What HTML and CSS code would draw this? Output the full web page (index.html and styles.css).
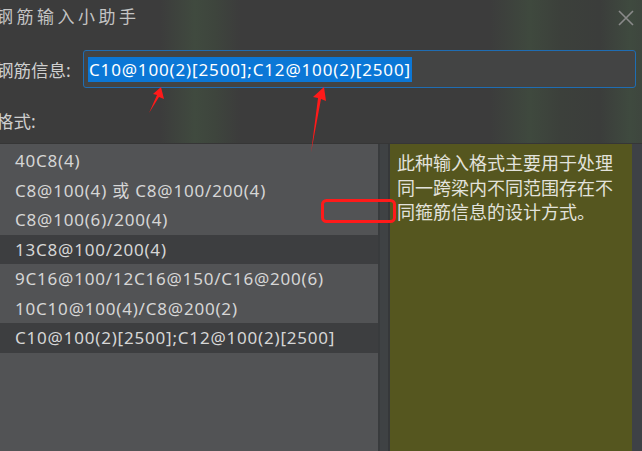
FILE: index.html
```html
<!DOCTYPE html>
<html lang="zh-CN">
<head>
	<meta charset="UTF-8">
	<meta name="viewport" content="width=device-width, initial-scale=1.0">
	<title>钢筋输入小助手</title>
	<link rel="stylesheet" href="styles.css">
</head>
<body>
	<div class="dialog">
		<div class="titlebar">
			<span class="title">钢筋输入小助手</span>
			<svg class="close" width="16" height="16" viewBox="0 0 16 16">
				<path d="M1 1 L15 15 M15 1 L1 15" stroke="#8a8a8a" stroke-width="1.6" fill="none"/>
			</svg>
		</div>

		<div class="info-row">
			<span class="label">钢筋信息:</span>
			<div class="input"><span class="selected">C10@100(2)[2500];C12@100(2)[2500]</span></div>
		</div>

		<div class="format-label">格式:</div>

		<div class="panels">
			<ul class="format-list">
				<li>40C8(4)</li>
				<li>C8@100(4) 或 C8@100/200(4)</li>
				<li>C8@100(6)/200(4)</li>
				<li class="active">13C8@100/200(4)</li>
				<li>9C16@100/12C16@150/C16@200(6)</li>
				<li>10C10@100(4)/C8@200(2)</li>
				<li class="active">C10@100(2)[2500];C12@100(2)[2500]</li>
			</ul>
			<div class="splitter"></div>
			<div class="desc">此种输入格式主要用于处理同一跨梁内不同范围存在不同箍筋信息的设计方式。</div>
			<div class="edge"></div>
		</div>
	</div>

	<!-- 标注 -->
	<svg class="marks" width="642" height="451" viewBox="0 0 642 451">
		<path d="M161 87 L164 99 L159 97 L149 113 L157 95 L153 94 Z" fill="#ff1a1a"/>
		<path d="M324 87 L326 101 L321 99 L311 153 L318 98 L313 97 Z" fill="#ff1a1a"/>
		<rect x="322.5" y="200.5" width="72" height="21" rx="4" fill="none" stroke="#ff1a1a" stroke-width="3"/>
	</svg>
</body>
</html>
```

FILE: styles.css
```css
* {
	margin: 0;
	padding: 0;
	box-sizing: border-box;
}

body {
	width: 642px;
	height: 451px;
	overflow: hidden;
	font-family: 'Noto Sans', 'Noto Sans CJK SC', sans-serif;
	color: #d4d4d4;
	background-color: #3c3c3c;
	background-image: linear-gradient(90deg,
		#3c3c3c 0px, #3c3c3c 160px, #404a3f 195px, #3e453d 215px, #3c3c3c 240px,
		#3c3c3c 490px, #3f493e 530px, #3c403b 560px, #3b3d3b 600px, #3f4a3f 630px, #3e463e 642px);
	position: relative;
}

.dialog {
	display: flex;
	flex-direction: column;
	height: 100%;
}

.titlebar {
	height: 40px;
	display: flex;
	align-items: flex-start;
	justify-content: space-between;
	padding: 4px 8px 0 0;
}

.title {
	margin-left: -4px;
	font-size: 17px;
	letter-spacing: 3.5px;
	color: #c4c4c4;
	line-height: 26px;
}

.close {
	margin-top: 6px;
}

.info-row {
	display: flex;
	align-items: center;
	height: 38px;
	margin-top: 10px;
	padding-right: 6px;
}

.label {
	margin-left: -4px;
	width: 87px;
	font-size: 17.5px;
	color: #cfcfcf;
}

.input {
	flex: 1;
	height: 38px;
	border: 1px solid #1f6db3;
	border-radius: 3px;
	background: #434444;
	padding: 6px 4px;
	display: flex;
	align-items: center;
}

.selected {
	background: #0b77d6;
	color: #ffffff;
	font-size: 17px;
	letter-spacing: 0.85px;
	line-height: 25px;
	padding: 0 1px;
}

.format-label {
	margin-left: -4px;
	height: 55px;
	padding-top: 22px;
	font-size: 17.5px;
	line-height: 22px;
	color: #cfcfcf;
}

.panels {
	flex: 1;
	display: flex;
	border-top: 1px solid #363636;
}

.format-list {
	list-style: none;
	width: 378px;
	background: #525355;
	padding-top: 2px;
}

.format-list li {
	height: 29.5px;
	line-height: 29.5px;
	padding-left: 15px;
	font-size: 17px;
	letter-spacing: 0.8px;
	color: #d6d6d6;
	white-space: nowrap;
}

.format-list li.active {
	background: #3d3e40;
}

.splitter {
	width: 12px;
	background: #3f4244;
	border-left: 2px solid #393b3d;
	border-right: 2px solid #36383a;
}

.desc {
	width: 242px;
	background: #55561f;
	padding: 7px 12px 0 7px;
	font-size: 18px;
	line-height: 24.5px;
	color: #e2e2dc;
}

.edge {
	flex: 1;
	background: #3e4146;
}

.marks {
	position: absolute;
	left: 0;
	top: 0;
	pointer-events: none;
}
```
